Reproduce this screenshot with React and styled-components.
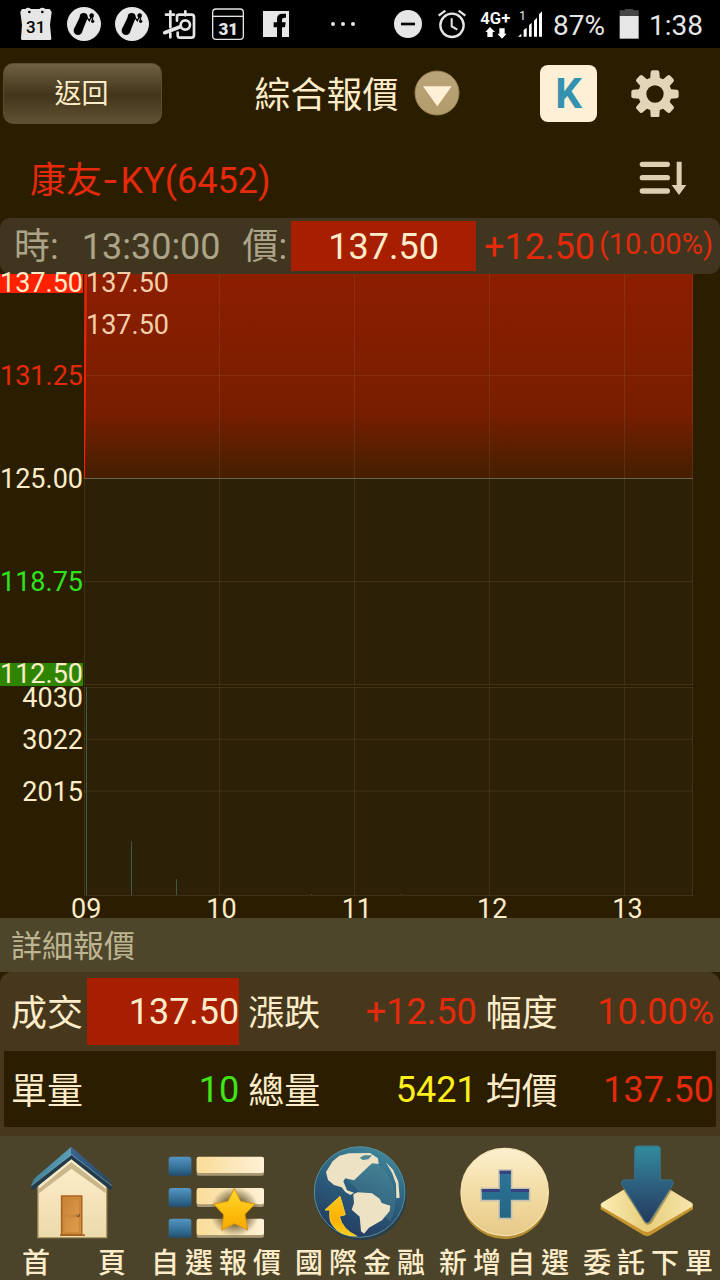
import React from "react";
import styled, { createGlobalStyle } from "styled-components";

const GlobalStyle = createGlobalStyle`
  * { box-sizing: border-box; }
  body {
    margin: 0;
    background: #2b1d00;
    color: #fcecc9;
    font-family: Roboto, "Noto Sans CJK TC", sans-serif;
  }
  button { font: inherit; color: inherit; border: 0; padding: 0; background: none; cursor: pointer; }
  a { color: inherit; text-decoration: none; }
  svg { display: block; flex: none; }
`;

const RED = "#e42a0b";

const Page = styled.div`
  display: flex;
  flex-direction: column;
  min-height: 100vh;
`;

/* ---------- status bar ---------- */

const StatusBar = styled.div`
  display: flex;
  justify-content: space-between;
  height: 48px;
  padding: 0 17px 0 12px;
  background: #000;
  color: #e6e6e6;
  font-size: 28px;
  line-height: 52px;
`;

const StatusGroup = styled.div`
  display: flex;
  height: 48px;
`;

const StatusDots = styled.div`
  display: flex;
  align-items: center;
  gap: 6px;
  margin-left: 31px;
  i {
    width: 4px;
    height: 4px;
    border-radius: 50%;
    background: #e6e6e6;
  }
`;

const Battery = styled.span`
  padding: 0 10px 0 6px;
`;

const Clock = styled.time`
  padding-left: 6px;
`;

const StatusGlyph = ({ x, w = 144, children }) => (
  <svg width={w / 3} height="48" viewBox={`${x} 0 ${w} 144`} fill="#e6e6e6" aria-hidden="true">
    {children}
  </svg>
);

const Molecule = ({ x }) => (
  <StatusGlyph x={x}>
    <g transform={`translate(${x + 72} 72)`}>
      <circle r="51" />
      <g fill="#000">
        <circle cx="-18" cy="20" r="13" />
        <circle cx="-1" cy="-21" r="12" />
        <path d="M-31 17L-13 -20L9 -14L-5 22Z" />
        <path d="M4 -26L16 -10L24 -25L26 -8" fill="none" stroke="#000" strokeWidth="4" />
        <circle cx="23" cy="-25" r="7" />
        <circle cx="26" cy="-8" r="5" />
      </g>
    </g>
  </StatusGlyph>
);

const Status = () => (
  <StatusBar>
    <StatusGroup>
      <StatusGlyph x={36}>
        <path d="M66 27H76Q84 20 93 27H118Q127 20 136 27H149L155 36L150 74L154 116Q154 120 149 120H67Q62 120 63 115L66 74L61 36Z" />
        <circle cx="88" cy="36" r="4" fill="#000" />
        <circle cx="127" cy="36" r="4" fill="#000" />
        <text x="107" y="100" textAnchor="middle" fontSize="51" fontWeight="500" fill="#000">31</text>
      </StatusGlyph>
      <Molecule x={180} />
      <Molecule x={324} />
      <StatusGlyph x={468}>
        <g fill="none" stroke="#e6e6e6" strokeWidth="8" strokeLinecap="round">
          <path d="M498 44H522M511 34V82M511 100V112" />
          <path d="M556 34V46M531 62V50Q531 44 538 44H574Q582 44 582 52V105Q582 113 574 113H540Q533 113 533 106V98" />
          <circle cx="556" cy="75" r="14" />
          <path d="M494 98L541 80" strokeWidth="11" />
        </g>
      </StatusGlyph>
      <StatusGlyph x={612}>
        <rect x="638" y="27" width="92" height="91" rx="10" fill="none" stroke="#e6e6e6" strokeWidth="4" />
        <path d="M638 49H730" stroke="#e6e6e6" strokeWidth="4" />
        <text x="685" y="104" textAnchor="middle" fontSize="51" fontWeight="900">31</text>
      </StatusGlyph>
      <StatusGlyph x={756}>
        <path d="M789 33H867V111H846V82H855L857 67H846V59Q846 53 853 53H858V41H848Q831 41 831 57V67H821V82H831V111H789Z" />
      </StatusGlyph>
      <StatusDots><i /><i /><i /></StatusDots>
    </StatusGroup>
    <StatusGroup>
      <StatusGlyph x={72}>
        <circle cx="144" cy="72" r="42" />
        <path d="M123 68H165V76H123Z" fill="#000" />
      </StatusGlyph>
      <StatusGlyph x={216} w={120}>
        <g fill="none" stroke="#e6e6e6" strokeWidth="7">
          <circle cx="276" cy="76" r="35" />
          <path d="M236 47L256 32M316 47L296 32" />
          <path d="M275 55V79L292 89" strokeWidth="6" />
        </g>
      </StatusGlyph>
      <StatusGlyph x={336} w={126}>
        <text x="361" y="73" fontSize="50" fontWeight="600" fill="#fff">4G+</text>
        <path d="M390 81L405 96H398V111H382V96H376Z M418 85H434V101H440L426 116L412 101H418Z" fill="#fff" />
      </StatusGlyph>
      <StatusGlyph x={462} w={99}>
        <text x="477" y="60" fontSize="38">1</text>
        <path d="M474 110L484 101V110Z M491 110V90L500 83V110Z M507 110V76L515 68V110Z M522 110V62L531 53V110Z M537 110V43L546 34V110Z" fill="#fff" />
      </StatusGlyph>
      <Battery>87%</Battery>
      <StatusGlyph x={765} w={84}>
        <path d="M779 50V31H795V27H819V31H836V50Z" fill="#454545" />
        <path d="M779 48H836V116H779Z" />
      </StatusGlyph>
      <Clock>1:38</Clock>
    </StatusGroup>
  </StatusBar>
);

/* ---------- header ---------- */

const Header = styled.header`
  display: grid;
  grid-template-columns: 1fr auto 1fr;
  align-items: center;
  height: 90px;
  padding: 0 41px 0 3px;
`;

const BackButton = styled.button`
  justify-self: start;
  width: 159px;
  height: 61px;
  padding: 0 2px 4px 0;
  border: 1px solid #5c4d2d;
  border-radius: 10px;
  background: linear-gradient(#6e6041, #43351a 52%, #5f5133);
  font-size: 27px;
`;

const TitleButton = styled.button`
  display: flex;
  align-items: center;
  gap: 15px;
  margin-left: 32px;
  font-size: 36px;
  line-height: 48px;
  span { padding-top: 5px; }
`;

const HeaderTools = styled.div`
  display: flex;
  justify-self: end;
  align-items: center;
  gap: 34px;
`;

const KButton = styled.button`
  width: 57px;
  height: 57px;
  border-radius: 8px;
  background: #fdf0d6;
  color: #3492b0;
  font-size: 42px;
  font-weight: 700;
  line-height: 57px;
`;

const StockRow = styled.div`
  display: flex;
  align-items: center;
  justify-content: space-between;
  height: 80px;
  padding: 0 33px 0 30px;
`;

const StockName = styled.h1`
  margin: 0;
  padding-top: 4px;
  color: ${RED};
  font-size: 36px;
  font-weight: 400;
  line-height: 48px;
`;

const Dash = styled.span`
  padding-right: 2px;
  font-family: Inter, sans-serif;
`;

/* ---------- quote bar ---------- */

const QuoteBar = styled.div`
  display: flex;
  align-items: flex-start;
  gap: 8px;
  height: 56px;
  padding: 3px 7px 0 14px;
  border-radius: 10px;
  background: #403620;
  color: #aca488;
  font-size: 36px;
  line-height: 52px;
`;

const QuoteTime = styled.time`
  margin: 0 14px 0 15px;
`;

const QuotePrice = styled.strong`
  flex: 1;
  height: 50px;
  margin-left: -4px;
  background: #a81e00;
  color: #fcecc9;
  font-weight: 400;
  text-align: center;
`;

const QuoteChange = styled.span`
  display: flex;
  gap: 4px;
  color: ${RED};
  small {
    font-size: 29px;
    line-height: 46px;
  }
`;

/* ---------- chart ---------- */

const Chart = styled.section`
  display: grid;
  grid-template-columns: 84px 1fr;
  grid-template-rows: 411px 209px 22px;
  row-gap: 2px;
  height: 644px;
  padding-right: 27px;
  font-size: 27px;
  line-height: 23px;
`;

const Axis = styled.div`
  display: flex;
  flex-direction: column;
  padding: 0 1px 0 0;
  text-align: right;
`;

const Tick = styled.div`
  display: flex;
  flex: none;
  align-items: ${(p) => p.$align || "center"};
  justify-content: flex-end;
  height: ${(p) => p.$height}px;
  color: ${(p) => p.$color || "#fcecc9"};
`;

const Limit = styled.span`
  line-height: ${(p) => p.$height}px;
  background: ${(p) => p.$fill};
`;

const Plot = styled.div`
  display: grid;
  > * { grid-area: 1 / 1; }
  svg { width: 100%; height: 100%; min-width: 0; }
`;

const PlotNotes = styled.div`
  display: flex;
  flex-direction: column;
  align-items: flex-start;
  gap: 23px;
  padding-left: 2px;
  color: #f2cfaa;
  line-height: 19px;
`;

const Hours = styled.div`
  display: grid;
  grid-column: 2;
  grid-template-columns: repeat(4, 2fr) 1fr;
  span { margin-left: -13px; }
`;

const hourLines = [135, 270, 405, 540];

const PriceChart = () => (
  <svg viewBox="0 0 609 411" preserveAspectRatio="none" aria-label="price">
    <defs>
      <linearGradient id="area" x1="0" y1="0" x2="0" y2="1">
        <stop offset="0" stopColor="#8d1e00" />
        <stop offset="0.68" stopColor="#781e00" />
        <stop offset="1" stopColor="#431f00" />
      </linearGradient>
    </defs>
    <rect width="609" height="411" fill="#2c2106" />
    <rect width="609" height="204" fill="url(#area)" />
    <g fill="#a08a60" fillOpacity="0.17">
      {[101, 307, 410].map((y) => <rect key={y} y={y} width="609" height="1" />)}
      {[0, ...hourLines, 608].map((x) => <rect key={x} x={x} width="1" height="411" />)}
    </g>
    <rect y="204" width="609" height="1" fill="#6b634a" />
    <path d="M2 0L0 204" stroke="#f02206" strokeWidth="2" />
  </svg>
);

const VolumeChart = () => (
  <svg viewBox="0 0 609 210" preserveAspectRatio="none" aria-label="volume">
    <rect width="609" height="210" fill="#2c2106" />
    <g fill="#a08a60" fillOpacity="0.17">
      {[0, 52, 104, 209].map((y) => <rect key={y} y={y} width="609" height="1" />)}
      {[0, ...hourLines, 608].map((x) => <rect key={x} x={x} width="1" height="210" />)}
    </g>
    <g fill="#3d5a46">
      <rect x="2" width="1" height="209" />
      <rect x="47" y="155" width="1" height="54" />
      <rect x="92" y="193" width="1" height="16" />
      <rect x="137" y="208" width="1" height="1" />
      <rect x="227" y="208" width="1" height="1" />
      <rect x="317" y="208" width="1" height="1" />
    </g>
  </svg>
);

/* ---------- details ---------- */

const SectionTitle = styled.h2`
  margin: 0;
  padding: 4px 11px 0;
  background: #4e462b;
  color: #bdb491;
  font-size: 31px;
  font-weight: 400;
  line-height: 50px;
`;

const Details = styled.div`
  padding: 0 4px 9px;
  border-radius: 12px 12px 0 0;
  background: #47381d;
`;

const DetailTable = styled.table`
  width: 100%;
  table-layout: fixed;
  border-collapse: collapse;
  font-size: 36px;
`;

const DetailRow = styled.tr`
  height: ${(p) => (p.$dark ? 76 : 79)}px;
  background: ${(p) => (p.$dark ? "#2b1d00" : "transparent")};
`;

const DetailLabel = styled.th`
  width: 83px;
  padding: 5px 0 0 7px;
  font-weight: 400;
  line-height: 64px;
  text-align: left;
  white-space: nowrap;
`;

const DetailValue = styled.td`
  padding: 0 2px 0 0;
  line-height: 65px;
  text-align: right;
  color: ${(p) => p.$color || "#fcecc9"};
  span {
    display: block;
    padding-top: 2px;
    background: ${(p) => p.$fill || "transparent"};
  }
`;

const rows = [
  [
    { label: "成交", value: "137.50", fill: "#a81e00" },
    { label: "漲跌", value: "+12.50", color: RED },
    { label: "幅度", value: "10.00%", color: RED },
  ],
  [
    { label: "單量", value: "10", color: "#3fe516" },
    { label: "總量", value: "5421", color: "#fff01c" },
    { label: "均價", value: "137.50", color: RED },
  ],
];

/* ---------- bottom navigation ---------- */

const Nav = styled.nav`
  display: flex;
  flex: 1;
  padding-top: 8px;
  background: #4c442a;
`;

const NavItem = styled.a`
  display: flex;
  flex: 1;
  flex-direction: column;
  align-items: center;
  min-width: 0;
  svg { width: 100%; height: 96px; }
`;

const NavLabel = styled.span`
  width: ${(p) => (p.$short ? 108 : 130)}px;
  padding: 8px 0 0 ${(p) => (p.$short ? 4 : 0)}px;
  font-size: 28px;
  font-weight: 500;
  line-height: 32px;
  text-align: justify;
  text-align-last: justify;
  white-space: nowrap;
`;

const HomeIcon = () => (
  <svg viewBox="0 42 432 288" aria-hidden="true">
    <defs>
      <linearGradient id="wall" x1="0" y1="0" x2="0" y2="1"><stop stopColor="#fff0cc" /><stop offset="1" stopColor="#ecd9ac" /></linearGradient>
      <linearGradient id="roofL" x1="0" y1="0" x2="1" y2="0"><stop stopColor="#3f8196" /><stop offset="1" stopColor="#5ba0b8" /></linearGradient>
      <linearGradient id="roofR" x1="0" y1="0" x2="1" y2="1"><stop stopColor="#3b6590" /><stop offset="1" stopColor="#254568" /></linearGradient>
      <linearGradient id="door" x1="0" y1="0" x2="1" y2="1"><stop stopColor="#c97f35" /><stop offset="1" stopColor="#e0a14f" /></linearGradient>
    </defs>
    <path d="M114 165L214 80L320 165V323H114Z" fill="url(#wall)" stroke="#ad9866" strokeWidth="4" />
    <path d="M117 176L214 96L317 176V190L214 116L117 190Z" fill="#a08c5d" opacity="0.55" />
    <path d="M92 170L214 74L338 170L332 181L214 88L98 181Z" fill="#213b4c" />
    <path d="M92 168L102 146L214 50V76Z" fill="url(#roofL)" />
    <path d="M338 168L324 146L214 50V76Z" fill="url(#roofR)" />
    <path d="M94 168L214 73L336 168" fill="none" stroke="#79a9b8" strokeWidth="2" />
    <path d="M185 198H245V314H185Z" fill="url(#door)" stroke="#a9641d" strokeWidth="5" />
    <path d="M192 206H238V256H192ZM192 260H238V308H192Z" fill="none" stroke="#c78638" strokeWidth="3" />
    <path d="M180 313H255V318H180Z" fill="#a9641d" />
    <circle cx="235" cy="256" r="5" fill="#7a4310" />
    <circle cx="234" cy="255" r="2" fill="#ffe9b8" />
  </svg>
);

const ListIcon = () => (
  <svg viewBox="432 42 432 288" aria-hidden="true">
    <defs>
      <linearGradient id="dot" x1="0" y1="0" x2="0" y2="1"><stop stopColor="#5596c4" /><stop offset="0.75" stopColor="#2b6488" /><stop offset="1" stopColor="#284a68" /></linearGradient>
      <linearGradient id="bar"><stop stopColor="#f9dc97" /><stop offset="0.6" stopColor="#fbe8bd" /><stop offset="1" stopColor="#fff1d4" /></linearGradient>
      <linearGradient id="star" x1="0" y1="0" x2="0" y2="1"><stop stopColor="#ffd934" /><stop offset="0.6" stopColor="#fdbc0c" /><stop offset="1" stopColor="#f5a800" /></linearGradient>
      <radialGradient id="glow"><stop offset="0.5" stopColor="#50421d" stopOpacity="0.75" /><stop offset="1" stopColor="#50421d" stopOpacity="0" /></radialGradient>
    </defs>
    {[80, 174, 266].map((y) => (
      <g key={y}>
        <rect x="506" y={y} width="68" height="58" rx="9" fill="url(#dot)" />
        <rect x="590" y={y + 2} width="202" height="55" rx="6" fill="#a89974" />
        <rect x="590" y={y} width="202" height="49" rx="6" fill="url(#bar)" />
      </g>
    ))}
    <circle cx="704" cy="245" r="75" fill="url(#glow)" />
    <path d="M703 175L722 214L765 222L735 253L743 300L704 281L665 300L671 254L641 222L684 214Z" fill="url(#star)" stroke="#d99410" strokeWidth="3" strokeLinejoin="round" />
  </svg>
);

const GlobeIcon = () => (
  <svg viewBox="-6 42 432 288" aria-hidden="true">
    <defs>
      <linearGradient id="sea" x1="0.7" y1="0" x2="0.3" y2="1"><stop stopColor="#41879a" /><stop offset="0.45" stopColor="#2c607f" /><stop offset="1" stopColor="#24395d" /></linearGradient>
      <linearGradient id="swoosh" x1="0" y1="0" x2="0" y2="1"><stop stopColor="#ffc51d" /><stop offset="0.6" stopColor="#ffb000" /><stop offset="1" stopColor="#f3d023" /></linearGradient>
    </defs>
    <circle cx="213" cy="194" r="137" fill="#2c3e4a" />
    <circle cx="209" cy="186" r="136" fill="url(#sea)" stroke="#52909e" strokeWidth="3" />
    <path d="M209 186L120 95A132 132 0 0 1 300 275Z" fill="#6ba1a3" opacity="0.22" />
    <g fill="#ede2c4">
      <path d="M108 126L128 94L148 77L177 70L240 69L264 85L266 102L247 100L237 108L192 151L166 145L160 154L171 181L192 188L181 195L166 186L155 172L132 165L114 150Z" />
      <path d="M190 193L203 187L246 190L269 206L275 219L301 227L299 243L276 271L237 293L222 311L213 304L209 260L185 239L192 219Z" />
      <path d="M287 96L309 119L325 155L329 203L319 205L318 162L306 128Z" />
    </g>
    <path d="M209 83L223 76H246L235 88L218 90Z" fill="#4d8995" />
    <path d="M105 240L150 199L166 254L148 259Q157 299 200 318Q147 319 125 281Q117 267 120 240Z" fill="url(#swoosh)" stroke="#f2cf31" strokeWidth="3" strokeLinejoin="round" />
  </svg>
);

const PlusIcon = () => (
  <svg viewBox="426 42 432 288" aria-hidden="true">
    <defs>
      <linearGradient id="coin" x1="0" y1="0" x2="0" y2="1"><stop stopColor="#fdf0d0" /><stop offset="0.5" stopColor="#f3dca3" /><stop offset="1" stopColor="#e6c988" /></linearGradient>
      <linearGradient id="plus" x1="0" y1="0" x2="0" y2="1"><stop stopColor="#2f7499" /><stop offset="1" stopColor="#236683" /></linearGradient>
    </defs>
    <circle cx="644" cy="195" r="132" fill="#b78d31" />
    <circle cx="644" cy="186" r="131" fill="url(#coin)" stroke="#f6e2b1" strokeWidth="4" />
    <path d="M627 120H665V175H719V212H665V266H627V212H573V175H627Z" fill="url(#plus)" stroke="#c7c1ae" strokeWidth="5" />
    <path d="M629 122H663V132H629ZM575 177H629V186H575ZM663 177H717V186H663Z" fill="#36417f" />
  </svg>
);

const OrderIcon = () => (
  <svg viewBox="18 42 432 288" aria-hidden="true">
    <defs>
      <linearGradient id="tile"><stop stopColor="#fbedb4" /><stop offset="0.5" stopColor="#e8ce7c" /><stop offset="1" stopColor="#f6e5ae" /></linearGradient>
      <linearGradient id="arrow" x1="0" y1="0" x2="0" y2="1"><stop stopColor="#328b9c" /><stop offset="0.5" stopColor="#2d607f" /><stop offset="1" stopColor="#253a5d" /></linearGradient>
    </defs>
    <path d="M92 224V238L221 316Q231 321 241 316L369 238V224Z" fill="#c6942e" />
    <path d="M96 218L220 143Q231 137 242 143L365 218Q372 224 365 231L242 303Q231 309 220 303L96 231Q88 224 96 218Z" fill="url(#tile)" />
    <path d="M154 170L225 281Q235 288 245 279L310 172Z" fill="#6b5927" opacity="0.5" />
    <path d="M202 48H263Q271 48 271 57V150H302Q312 152 309 162L240 272Q232 284 223 272L155 162Q153 152 162 150H194V57Q194 49 202 48Z" fill="url(#arrow)" stroke="#38718b" strokeWidth="3" />
  </svg>
);

const navItems = [
  { label: "首頁", Icon: HomeIcon, short: true },
  { label: "自選報價", Icon: ListIcon },
  { label: "國際金融", Icon: GlobeIcon },
  { label: "新增自選", Icon: PlusIcon },
  { label: "委託下單", Icon: OrderIcon },
];

export default function App() {
  return (
    <Page>
      <GlobalStyle />
      <Status />
      <Header>
        <BackButton>返回</BackButton>
        <TitleButton>
          <span>綜合報價</span>
          <svg width="46" height="46" viewBox="161 56 138 138" aria-hidden="true">
            <defs>
              <linearGradient id="drop" x1="0" y1="0" x2="0" y2="1"><stop stopColor="#b9a47a" /><stop offset="1" stopColor="#b39c6a" /></linearGradient>
            </defs>
            <circle cx="230" cy="125" r="66" fill="url(#drop)" stroke="#988356" strokeWidth="3" />
            <path d="M188 105H274L231 165Z" fill="#fdf0d6" />
          </svg>
        </TitleButton>
        <HeaderTools>
          <KButton>K</KButton>
          <button aria-label="設定">
            <svg width="48" height="48" viewBox="813 58 144 144" fill="#e3d5b7" aria-hidden="true">
              <circle cx="885" cy="133" r="38" fill="none" stroke="#e3d5b7" strokeWidth="24" />
              {[0, 45, 90, 135, 180, 225, 270, 315].map((a) => (
                <path key={a} transform={`rotate(${a} 885 133)`} d="M870 95L872 67Q873 62 878 62H892Q897 62 898 67L900 95Z" />
              ))}
            </svg>
          </button>
        </HeaderTools>
      </Header>
      <StockRow>
        <StockName>康友<Dash>-</Dash>KY(6452)</StockName>
        <button aria-label="排序">
          <svg width="48" height="36" viewBox="838 330 144 108" aria-hidden="true">
            <path d="M848 343H923M848 383H923M848 423H923" stroke="#ddceb0" strokeWidth="16" strokeLinecap="round" />
            <path d="M951 335H966V405H980L958 435L936 405H951Z" fill="#ddceb0" />
          </svg>
        </button>
      </StockRow>
      <QuoteBar>
        <span>時:</span>
        <QuoteTime>13:30:00</QuoteTime>
        <span>價:</span>
        <QuotePrice>137.50</QuotePrice>
        <QuoteChange>+12.50<small>(10.00%)</small></QuoteChange>
      </QuoteBar>
      <Chart>
        <Axis>
          <Tick $height={51} $align="flex-start"><Limit $height={19} $fill="#ff2000">137.50</Limit></Tick>
          <Tick $height={103} $color={RED}>131.25</Tick>
          <Tick $height={103}>125.00</Tick>
          <Tick $height={103} $color="#2ee51c">118.75</Tick>
          <Tick $height={52} $align="flex-end"><Limit $height={23} $fill="#2f8500">112.50</Limit></Tick>
        </Axis>
        <Plot>
          <PriceChart />
          <PlotNotes><span>137.50</span><span>137.50</span></PlotNotes>
        </Plot>
        <Axis>
          <Tick $height={27} $align="flex-start">4030</Tick>
          <Tick $height={52}>3022</Tick>
          <Tick $height={52}>2015</Tick>
        </Axis>
        <Plot>
          <VolumeChart />
        </Plot>
        <Hours>
          {["09", "10", "11", "12", "13"].map((h) => <span key={h}>{h}</span>)}
        </Hours>
      </Chart>
      <SectionTitle>詳細報價</SectionTitle>
      <Details>
        <DetailTable>
          <tbody>
            {rows.map((row, i) => (
              <DetailRow key={i} $dark={i === 1}>
                {row.map((c) => (
                  <React.Fragment key={c.label}>
                    <DetailLabel scope="row">{c.label}</DetailLabel>
                    <DetailValue $color={c.color} $fill={c.fill}><span>{c.value}</span></DetailValue>
                  </React.Fragment>
                ))}
              </DetailRow>
            ))}
          </tbody>
        </DetailTable>
      </Details>
      <Nav>
        {navItems.map(({ label, Icon, short }) => (
          <NavItem key={label} href="#">
            <Icon />
            <NavLabel $short={short}>{label}</NavLabel>
          </NavItem>
        ))}
      </Nav>
    </Page>
  );
}
